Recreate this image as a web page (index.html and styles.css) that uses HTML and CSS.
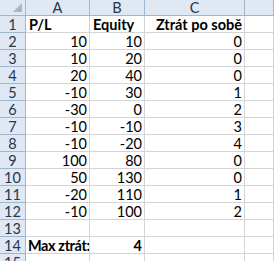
FILE: index.html
```html
<!DOCTYPE html>
<html>
<head>
<meta charset="utf-8">
<link rel="stylesheet" href="styles.css">
</head>
<body>
<div class="sheet">
  <div class="corner"><span class="tri"></span></div>
  <div class="ch">A</div><div class="ch">B</div><div class="ch">C</div><div class="ch"></div>

  <div class="rh">1</div><div class="c b">P/L</div><div class="c b">Equity</div><div class="c b r">Ztrát po sobě</div><div class="c"></div>
  <div class="rh">2</div><div class="c r">10</div><div class="c r">10</div><div class="c r">0</div><div class="c"></div>
  <div class="rh">3</div><div class="c r">10</div><div class="c r">20</div><div class="c r">0</div><div class="c"></div>
  <div class="rh">4</div><div class="c r">20</div><div class="c r">40</div><div class="c r">0</div><div class="c"></div>
  <div class="rh">5</div><div class="c r">-10</div><div class="c r">30</div><div class="c r">1</div><div class="c"></div>
  <div class="rh">6</div><div class="c r">-30</div><div class="c r">0</div><div class="c r">2</div><div class="c"></div>
  <div class="rh">7</div><div class="c r">-10</div><div class="c r">-10</div><div class="c r">3</div><div class="c"></div>
  <div class="rh">8</div><div class="c r">-10</div><div class="c r">-20</div><div class="c r">4</div><div class="c"></div>
  <div class="rh">9</div><div class="c r">100</div><div class="c r">80</div><div class="c r">0</div><div class="c"></div>
  <div class="rh">10</div><div class="c r">50</div><div class="c r">130</div><div class="c r">0</div><div class="c"></div>
  <div class="rh">11</div><div class="c r">-20</div><div class="c r">110</div><div class="c r">1</div><div class="c"></div>
  <div class="rh">12</div><div class="c r">-10</div><div class="c r">100</div><div class="c r">2</div><div class="c"></div>
  <div class="rh">13</div><div class="c"></div><div class="c"></div><div class="c"></div><div class="c"></div>
  <div class="rh">14</div><div class="c b tight">Max ztrát:</div><div class="c b r">4</div><div class="c"></div><div class="c"></div>
  <div class="rh">15</div><div class="c"></div><div class="c"></div><div class="c"></div><div class="c"></div>
</div>
</body>
</html>
```

FILE: styles.css
```css
html, body {
  margin: 0;
  padding: 0;
  background: #ffffff;
  overflow: hidden;
}
.sheet {
  display: grid;
  grid-template-columns: 26px 64px 55px 100px minmax(0, 1fr);
  grid-template-rows: 16px repeat(15, 17px);
  font-family: Lato, "Noto Sans", sans-serif;
  font-size: 14.5px;
  color: #000;
  width: 274px;
}
.sheet > div {
  box-sizing: border-box;
  overflow: hidden;
  white-space: nowrap;
}
.corner {
  background: #dfe8f3;
  border-right: 1px solid #9eb6ce;
  border-bottom: 1px solid #9eb6ce;
  position: relative;
}
.tri {
  position: absolute;
  right: 3px;
  bottom: 3px;
  width: 0;
  height: 0;
  border-left: 9px solid transparent;
  border-bottom: 9px solid #a9b6c6;
}
.ch {
  background: #dfe8f3;
  border-right: 1px solid #9eb6ce;
  border-bottom: 1px solid #9eb6ce;
  text-align: center;
  line-height: 15px;
  color: #26374b;
}
.rh {
  background: #dfe8f3;
  border-right: 1px solid #9eb6ce;
  border-bottom: 1px solid #9eb6ce;
  text-align: center;
  line-height: 17px;
  color: #26374b;
}
.c {
  border-right: 1px solid #d4d4d4;
  border-bottom: 1px solid #d4d4d4;
  line-height: 17px;
  padding: 0 2px 0 3px;
}
.b {
  font-weight: bold;
}
.r {
  text-align: right;
}
.sheet > .tight {
  letter-spacing: -0.4px;
  padding-left: 2px;
  padding-right: 0;
}
```
